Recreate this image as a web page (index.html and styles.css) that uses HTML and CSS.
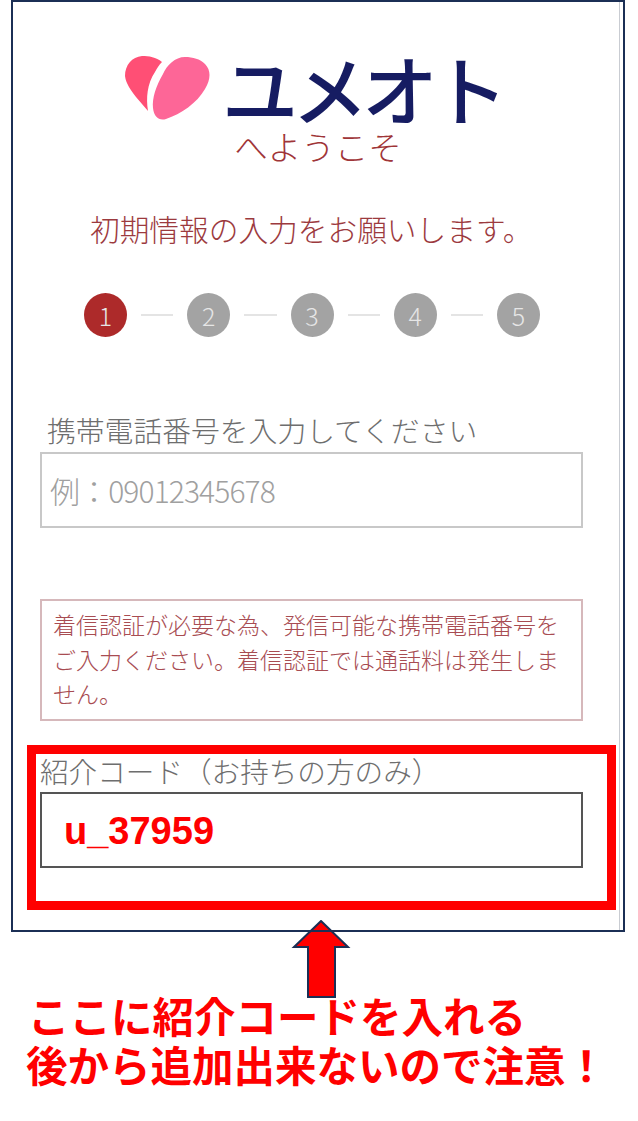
FILE: index.html
```html
<!DOCTYPE html>
<html lang="ja">
<head>
    <meta charset="UTF-8">
    <meta name="viewport" content="width=device-width, initial-scale=1.0">
    <title>ユメオト</title>
    <link rel="stylesheet" href="styles.css">
</head>
<body>
    <div class="frame">
        <div class="logo">
            <svg class="heart" width="86" height="66" viewBox="0 0 86 66">
                <path fill="#ff4f75" d="M37 6C31 1 24 0 17 0C7 1 0 9 0 20C1 28 6 34 11 41L23 55C21 42 22 28 30 16C32 12 34 9 37 6Z"/>
                <path fill="#fd6697" d="M60 1C50 1 42 9 38 18C31 30 27 42 28 52C29 61 34 65 41 63C56 58 72 47 80 33C86 23 86 14 80 8C75 3 68 1 60 1Z"/>
            </svg>
            <span class="logo-name">ユメオト</span>
        </div>
        <div class="welcome">へようこそ</div>
        <h1 class="intro">初期情報の入力をお願いします。</h1>

        <div class="steps">
            <span class="step active">1</span>
            <span class="line"></span>
            <span class="step">2</span>
            <span class="line"></span>
            <span class="step">3</span>
            <span class="line"></span>
            <span class="step">4</span>
            <span class="line"></span>
            <span class="step">5</span>
        </div>

        <div class="field-label phone-label">携帯電話番号を入力してください</div>
        <div class="input phone-input">例：09012345678</div>

        <div class="note">着信認証が必要な為、発信可能な携帯電話番号をご入力ください。着信認証では通話料は発生しません。</div>

        <div class="field-label code-label">紹介コード（お持ちの方のみ）</div>
        <div class="input code-input">u_37959</div>

        <div class="highlight"></div>
    </div>

    <svg class="arrow" width="60" height="78" viewBox="0 0 60 78">
        <path fill="#ff0000" stroke="#1b2f55" stroke-width="2" d="M30 1L57 27H44V77H17V27H3Z"/>
        <path stroke="#1b2f55" stroke-width="2" d="M20 11H40"/>
    </svg>

    <div class="caption">
        <p class="caption-first">ここに紹介コードを入れる</p>
        <p class="caption-second">後から追加出来ないので注意！</p>
    </div>
</body>
</html>
```

FILE: styles.css
```css
* {
    margin: 0;
    padding: 0;
    box-sizing: border-box;
    font-family: "Noto Sans CJK JP", "Noto Sans", sans-serif;
}

body {
    position: relative;
    background-color: white;
    height: 1121px;
    overflow: hidden;
}

.frame {
    position: relative;
    width: 614px;
    height: 932px;
    margin-left: 11px;
    padding-top: 48px;
    border: 2px solid #1b2f55;
    box-shadow: inset -3px 0 0 white, inset -4px 0 0 #c9ccd2;
    background-color: white;
}

.logo {
    display: flex;
    align-items: center;
    height: 74px;
    padding-left: 112px;
}

.heart {
    flex-shrink: 0;
    margin-top: 4px;
}

.logo-name {
    margin-left: 11px;
    font-size: 76px;
    line-height: 74px;
    font-weight: 500;
    letter-spacing: -6px;
    color: #161c62;
}

.welcome {
    margin-top: 4px;
    text-align: center;
    font-size: 33.5px;
    line-height: 36px;
    font-weight: 300;
    color: #9f3538;
}

.intro {
    margin-top: 45px;
    margin-left: 77px;
    font-size: 29.7px;
    line-height: 40px;
    font-weight: 300;
    white-space: nowrap;
    color: #9c3a3e;
}

.steps {
    display: flex;
    align-items: center;
    margin-top: 44px;
    padding-left: 71px;
}

.step {
    width: 43px;
    height: 44px;
    border-radius: 50%;
    background-color: #a3a3a3;
    color: #e6e6e6;
    text-align: center;
    font-size: 25px;
    font-weight: 300;
    line-height: 44px;
}

.step.active {
    background-color: #ad2a2a;
}

.line {
    width: 32.25px;
    height: 2px;
    margin: 0 14px;
    background-color: #e4e4e4;
}

.field-label {
    line-height: 40px;
    font-weight: 300;
    color: #6e6e6e;
}

.phone-label {
    margin-top: 73px;
    margin-left: 34px;
    font-size: 28.8px;
}

.input {
    width: 543px;
    height: 76px;
    margin-left: 27px;
    border: 2px solid #c8c8c8;
    line-height: 72px;
}

.phone-input {
    margin-top: 2px;
    padding-left: 8px;
    font-size: 30px;
    font-weight: 300;
    letter-spacing: -0.9px;
    color: #a0a0a0;
}

.note {
    width: 543px;
    height: 122px;
    margin-top: 71px;
    margin-left: 27px;
    padding: 6px 11px;
    border: 2px solid #d6b8bb;
    font-size: 23px;
    line-height: 34.5px;
    font-weight: 300;
    color: #a84c52;
}

.code-label {
    margin-top: 30px;
    margin-left: 27px;
    font-size: 28.6px;
}

.code-input {
    margin-top: 1px;
    padding-left: 22px;
    border-color: #555555;
    font-family: "Liberation Sans", sans-serif;
    font-size: 38px;
    font-weight: bold;
    line-height: 74px;
    color: #ff0000;
}

/* annotations drawn on top of the screenshot */
.highlight {
    position: absolute;
    left: 14px;
    top: 743px;
    width: 589px;
    height: 165px;
    border: 9px solid #ff0000;
}

.arrow {
    position: absolute;
    left: 291px;
    top: 920px;
}

.caption {
    margin-top: 59px;
    color: #ff0000;
    font-size: 41.5px;
    line-height: 49px;
    font-weight: bold;
}

.caption-first {
    margin-left: 28px;
}

.caption-second {
    margin-left: 26px;
}
```
